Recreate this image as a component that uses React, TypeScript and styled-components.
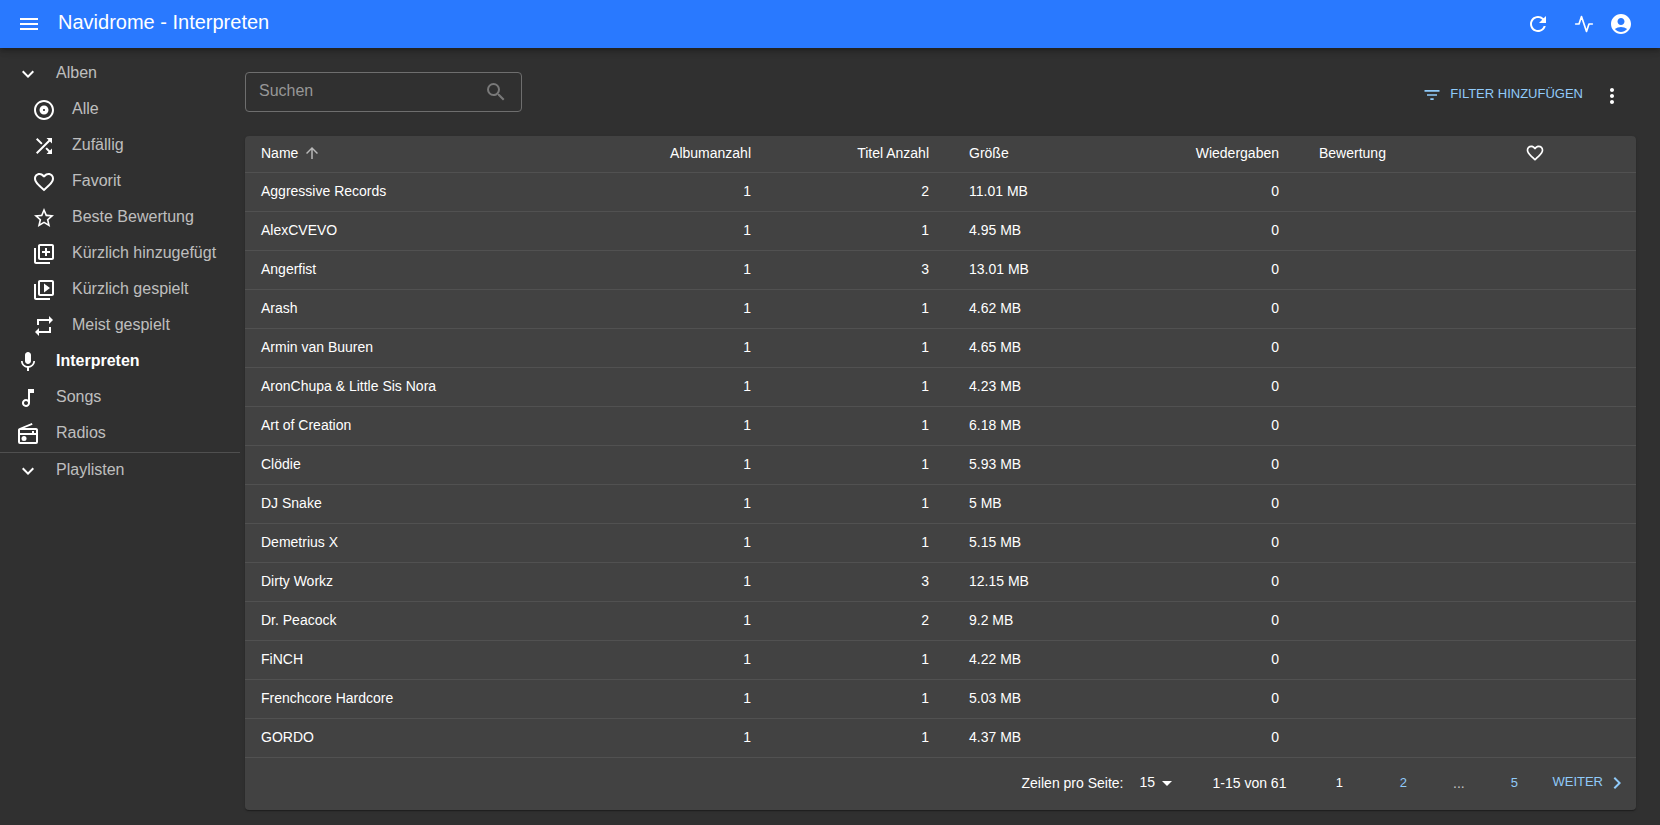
import React from 'react';
import styled, { createGlobalStyle } from 'styled-components';
import {
  MdMenu,
  MdRefresh,
  MdAccountCircle,
  MdExpandMore,
  MdOutlineAlbum,
  MdShuffle,
  MdFavoriteBorder,
  MdStarBorder,
  MdOutlineLibraryAdd,
  MdOutlineVideoLibrary,
  MdRepeat,
  MdMic,
  MdOutlineMusicNote,
  MdOutlineRadio,
  MdSearch,
  MdFilterList,
  MdMoreVert,
  MdArrowUpward,
  MdArrowDropDown,
  MdChevronRight,
} from 'react-icons/md';
import { FiActivity } from 'react-icons/fi';
import type { IconType } from 'react-icons';

const GlobalStyle = createGlobalStyle`
  *, *::before, *::after { box-sizing: border-box; }
  body {
    margin: 0;
    background: #303030;
    color: #fff;
    font-family: "Liberation Sans", Helvetica, Arial, sans-serif;
    font-size: 14px;
  }
  button, input, select { font: inherit; color: inherit; }
  svg { display: block; flex-shrink: 0; }
`;

const Page = styled.div`
  min-height: 100vh;
  display: flex;
  flex-direction: column;
`;

const AppBar = styled.header`
  position: relative;
  z-index: 1;
  display: flex;
  align-items: center;
  height: 48px;
  padding: 0 27px 0 17px;
  background: #2979ff;
  box-shadow: 0 2px 4px -1px rgba(0, 0, 0, 0.2), 0 4px 5px 0 rgba(0, 0, 0, 0.14),
    0 1px 10px 0 rgba(0, 0, 0, 0.12);
`;

const IconButton = styled.button`
  display: flex;
  padding: 0;
  border: 0;
  background: none;
  cursor: pointer;
`;

const Title = styled.h1`
  flex: 1;
  margin: 0 0 0 17px;
  padding-bottom: 4px;
  font-size: 20px;
  font-weight: 400;
  line-height: 32px;
`;

const BarActions = styled.div`
  display: flex;
  align-items: center;
`;

const BarAction = styled(IconButton)<{ $gap?: number }>`
  margin-left: ${({ $gap }) => $gap ?? 0}px;
`;

const Body = styled.div`
  flex: 1;
  display: flex;
  align-items: flex-start;
`;

const Sidebar = styled.nav`
  width: 240px;
  flex-shrink: 0;
  padding-top: 8px;
`;

const MenuLink = styled.a<{ $nested?: boolean; $active?: boolean }>`
  display: flex;
  align-items: center;
  gap: 16px;
  height: 36px;
  padding-left: ${({ $nested }) => ($nested ? 32 : 16)}px;
  color: ${({ $active }) => ($active ? '#fff' : 'rgba(255, 255, 255, 0.7)')};
  font-size: 16px;
  font-weight: ${({ $active }) => ($active ? 700 : 400)};
  line-height: 24px;
  text-decoration: none;
  white-space: nowrap;

  svg { color: #fff; }
`;

const MenuText = styled.span`
  padding-bottom: 2px;
`;

const Divider = styled.hr`
  height: 1px;
  margin: 0;
  border: 0;
  background: #4f4f4f;
`;

const Main = styled.main`
  flex: 1;
  min-width: 0;
  padding: 24px 24px 15px 5px;
`;

const Toolbar = styled.div`
  display: flex;
  justify-content: space-between;
  align-items: flex-start;
  padding-bottom: 16px;
`;

const SearchBox = styled.label`
  display: flex;
  align-items: center;
  width: 277px;
  height: 40px;
  padding: 0 13px;
  border: 1px solid #6e6e6e;
  border-radius: 4px;
  color: #797979;
`;

const SearchInput = styled.input`
  flex: 1;
  min-width: 0;
  padding: 0 0 2px;
  border: 0;
  outline: 0;
  background: none;
  color: #fff;
  font-size: 16px;

  &::placeholder { color: #979797; opacity: 1; }
`;

const Actions = styled.div`
  display: flex;
  align-items: center;
  gap: 17px;
  height: 48px;
  padding-right: 12px;
`;

const TextButton = styled.button`
  display: flex;
  align-items: center;
  gap: 8px;
  padding: 0 0 2px;
  border: 0;
  background: none;
  color: #90caf9;
  font-size: 13px;
  line-height: 20px;
  text-transform: uppercase;
  cursor: pointer;
`;

const ButtonText = styled.span`
  padding-bottom: 2px;
`;

const Card = styled.section`
  border-radius: 4px;
  background: #424242;
  box-shadow: 0 2px 1px -1px rgba(0, 0, 0, 0.2), 0 1px 1px 0 rgba(0, 0, 0, 0.14),
    0 1px 3px 0 rgba(0, 0, 0, 0.12);
`;

const Table = styled.table`
  width: 100%;
  table-layout: fixed;
  border-collapse: separate;
  border-spacing: 0;
`;

const Col = styled.col<{ $width: number }>`
  width: ${({ $width }) => $width}px;
`;

const HeadCell = styled.th<{ $align?: string }>`
  height: 37px;
  padding: 0 24px 2px 16px;
  border-bottom: 1px solid #515151;
  font-weight: 400;
  line-height: 20px;
  text-align: ${({ $align }) => $align ?? 'left'};
  white-space: nowrap;
`;

const Cell = styled.td<{ $align?: string }>`
  height: 39px;
  padding: 0 24px 2px 16px;
  border-bottom: 1px solid #515151;
  line-height: 20px;
  text-align: ${({ $align }) => $align ?? 'left'};
  white-space: nowrap;
`;

const SortButton = styled.button`
  display: inline-flex;
  align-items: center;
  gap: 5px;
  padding: 0;
  border: 0;
  background: none;
  line-height: 20px;
  vertical-align: top;
  cursor: pointer;
`;

const SortArrow = styled(MdArrowUpward)`
  color: #b8b8b8;
`;

const Footer = styled.footer`
  display: flex;
  justify-content: flex-end;
  align-items: center;
  height: 52px;
  padding: 0 7px 2px 0;
  line-height: 20px;
`;

const RowsSelect = styled.span`
  display: flex;
  align-items: center;
  margin: 0 33px 0 16px;

  svg { margin-left: -24px; pointer-events: none; }
`;

const Select = styled.select`
  width: 40px;
  padding: 0 0 2px;
  border: 0;
  outline: 0;
  appearance: none;
  background: #424242;
  line-height: 20px;
`;

const Pages = styled.nav`
  display: flex;
  align-items: center;
  margin-left: 21px;
`;

const PageButton = styled.button<{ $current?: boolean }>`
  width: 64px;
  padding: 0;
  border: 0;
  background: none;
  color: ${({ $current }) => ($current ? '#fff' : '#90caf9')};
  font-size: 13px;
  line-height: 20px;
  cursor: pointer;
`;

const Ellipsis = styled.span`
  width: 47px;
  color: #c6c6c6;
  text-align: center;
`;

const NextButton = styled(TextButton)`
  gap: 2px;
  margin-left: 6px;
  padding: 0;
`;

interface MenuEntry {
  label: string;
  icon: IconType;
  nested?: boolean;
  active?: boolean;
}

const menu: MenuEntry[] = [
  { label: 'Alben', icon: MdExpandMore },
  { label: 'Alle', icon: MdOutlineAlbum, nested: true },
  { label: 'Zufällig', icon: MdShuffle, nested: true },
  { label: 'Favorit', icon: MdFavoriteBorder, nested: true },
  { label: 'Beste Bewertung', icon: MdStarBorder, nested: true },
  { label: 'Kürzlich hinzugefügt', icon: MdOutlineLibraryAdd, nested: true },
  { label: 'Kürzlich gespielt', icon: MdOutlineVideoLibrary, nested: true },
  { label: 'Meist gespielt', icon: MdRepeat, nested: true },
  { label: 'Interpreten', icon: MdMic, active: true },
  { label: 'Songs', icon: MdOutlineMusicNote },
  { label: 'Radios', icon: MdOutlineRadio },
];

const artists: [string, number, number, string, number][] = [
  ['Aggressive Records', 1, 2, '11.01 MB', 0],
  ['AlexCVEVO', 1, 1, '4.95 MB', 0],
  ['Angerfist', 1, 3, '13.01 MB', 0],
  ['Arash', 1, 1, '4.62 MB', 0],
  ['Armin van Buuren', 1, 1, '4.65 MB', 0],
  ['AronChupa & Little Sis Nora', 1, 1, '4.23 MB', 0],
  ['Art of Creation', 1, 1, '6.18 MB', 0],
  ['Clödie', 1, 1, '5.93 MB', 0],
  ['DJ Snake', 1, 1, '5 MB', 0],
  ['Demetrius X', 1, 1, '5.15 MB', 0],
  ['Dirty Workz', 1, 3, '12.15 MB', 0],
  ['Dr. Peacock', 1, 2, '9.2 MB', 0],
  ['FiNCH', 1, 1, '4.22 MB', 0],
  ['Frenchcore Hardcore', 1, 1, '5.03 MB', 0],
  ['GORDO', 1, 1, '4.37 MB', 0],
];

const columnWidths = [400, 130, 178, 140, 210, 139, 194];

function MenuItem({ label, icon: Icon, nested, active }: MenuEntry) {
  return (
    <MenuLink href="#" $nested={nested} $active={active} aria-current={active ? 'page' : undefined}>
      <Icon size={24} />
      <MenuText>{label}</MenuText>
    </MenuLink>
  );
}

export default function App() {
  return (
    <Page>
      <GlobalStyle />
      <AppBar>
        <IconButton aria-label="Menü">
          <MdMenu size={24} />
        </IconButton>
        <Title>Navidrome - Interpreten</Title>
        <BarActions>
          <BarAction aria-label="Aktualisieren">
            <MdRefresh size={24} />
          </BarAction>
          <BarAction $gap={24} aria-label="Aktivität">
            <FiActivity size={20} />
          </BarAction>
          <BarAction $gap={15} aria-label="Profil">
            <MdAccountCircle size={24} />
          </BarAction>
        </BarActions>
      </AppBar>
      <Body>
        <Sidebar>
          {menu.map((entry) => (
            <MenuItem key={entry.label} {...entry} />
          ))}
          <Divider />
          <MenuItem label="Playlisten" icon={MdExpandMore} />
        </Sidebar>
        <Main>
          <Toolbar>
            <SearchBox>
              <SearchInput type="text" placeholder="Suchen" aria-label="Suchen" />
              <MdSearch size={24} />
            </SearchBox>
            <Actions>
              <TextButton>
                <MdFilterList size={20} />
                <ButtonText>Filter hinzufügen</ButtonText>
              </TextButton>
              <IconButton aria-label="Weitere Optionen">
                <MdMoreVert size={24} />
              </IconButton>
            </Actions>
          </Toolbar>
          <Card>
            <Table>
              <colgroup>
                {columnWidths.map((width, i) => (
                  <Col key={i} $width={width} />
                ))}
              </colgroup>
              <thead>
                <tr>
                  <HeadCell>
                    <SortButton>
                      Name
                      <SortArrow size={18} />
                    </SortButton>
                  </HeadCell>
                  <HeadCell $align="right">Albumanzahl</HeadCell>
                  <HeadCell $align="right">Titel Anzahl</HeadCell>
                  <HeadCell>Größe</HeadCell>
                  <HeadCell $align="right">Wiedergaben</HeadCell>
                  <HeadCell>Bewertung</HeadCell>
                  <HeadCell $align="center">
                    <SortButton aria-label="Favorit">
                      <MdFavoriteBorder size={20} />
                    </SortButton>
                  </HeadCell>
                </tr>
              </thead>
              <tbody>
                {artists.map(([name, albums, songs, size, plays]) => (
                  <tr key={name}>
                    <Cell>{name}</Cell>
                    <Cell $align="right">{albums}</Cell>
                    <Cell $align="right">{songs}</Cell>
                    <Cell>{size}</Cell>
                    <Cell $align="right">{plays}</Cell>
                    <Cell />
                    <Cell />
                  </tr>
                ))}
              </tbody>
            </Table>
            <Footer>
              <label htmlFor="rows">Zeilen pro Seite:</label>
              <RowsSelect>
                <Select id="rows" defaultValue="15">
                  <option>15</option>
                  <option>25</option>
                  <option>50</option>
                </Select>
                <MdArrowDropDown size={24} />
              </RowsSelect>
              <span>1-15 von 61</span>
              <Pages aria-label="Seiten">
                <PageButton $current>1</PageButton>
                <PageButton>2</PageButton>
                <Ellipsis>...</Ellipsis>
                <PageButton>5</PageButton>
                <NextButton>
                  <ButtonText>Weiter</ButtonText>
                  <MdChevronRight size={24} />
                </NextButton>
              </Pages>
            </Footer>
          </Card>
        </Main>
      </Body>
    </Page>
  );
}
